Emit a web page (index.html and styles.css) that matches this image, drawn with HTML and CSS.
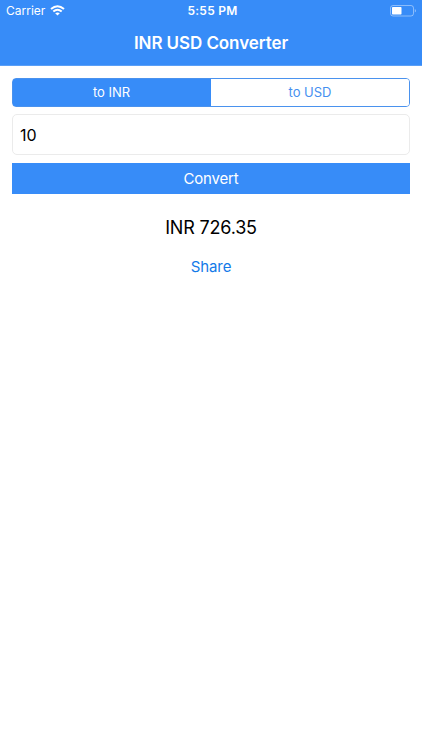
FILE: index.html
```html
<!DOCTYPE html>
<html lang="en">
<head>
<meta charset="utf-8">
<title>INR USD Converter</title>
<link rel="stylesheet" href="styles.css">
</head>
<body>
<header class="top">
  <div class="status">
    <div class="carrier"><span>Carrier</span>
      <svg class="wifi" width="15" height="11" viewBox="0 0 15 11" fill="none" stroke="#fff" stroke-width="2"><path d="M1 4.1Q7.5-1.7 14 4.1M3.300 6.600Q7.500 3 11.700 6.600"/><path d="M5.200 8.300Q7.500 6.500 9.800 8.300L7.500 10.600Z" fill="#fff" stroke="none"/></svg>
    </div>
    <div class="time">5:55 PM</div>
    <svg class="battery" width="26" height="12" viewBox="0 0 26 12"><rect x=".5" y=".5" width="23" height="10.500" rx="2.500" fill="none" stroke="#fff" stroke-opacity=".42"/><rect x="2" y="2" width="9.500" height="7.500" rx=".7" fill="#fff"/><path d="M24.800 3.900q1.200.5 1.200 1.800t-1.200 1.800Z" fill="#fff" fill-opacity=".45"/></svg>
  </div>
  <h1><span>INR USD Converter</span></h1>
</header>
<main>
  <div class="segments"><button class="active"><span>to INR</span></button><button><span>to USD</span></button></div>
  <div class="amount"><span>10</span></div>
  <button class="convert"><span>Convert</span></button>
  <p class="result"><span>INR 726.35</span></p>
  <a class="share"><span>Share</span></a>
</main>
</body>
</html>
```
FILE: styles.css
```css
* { box-sizing: border-box; }
body { margin: 0; min-height: 750px; background: #fff; color: #000; font-family: Inter, "Liberation Sans", sans-serif; }
button { margin: 0; padding: 0; border: 0; font: inherit; color: inherit; }
.top { height: 66px; background: #378cf8; border-bottom: 1px solid #5a9ff7; color: #fff; }
.status { height: 21px; padding: 0 6px; display: grid; grid-template-columns: 1fr auto 1fr; align-items: center; font-size: 12px; }
.carrier { display: flex; align-items: center; gap: 5px; }
.time { font-weight: 600; letter-spacing: .25px; padding-left: 3px; }
.battery { justify-self: end; }
h1 { margin: 0; height: 43px; display: flex; align-items: center; justify-content: center; font-size: 17px; font-weight: 600; letter-spacing: -.08px; }
main { padding: 12px 12px 0; display: flex; flex-direction: column; }
.segments { height: 29px; display: flex; border: 1px solid #4a92ee; border-radius: 4px; overflow: hidden; background: linear-gradient(90deg, #378cf8 50%, #fff 50%); font-size: 13px; }
.segments button { width: 50%; padding-bottom: 1px; background: #fff; color: #4690f0; }
.segments .active { padding-right: 1px; background: #378cf8; color: #fff; }
.amount { height: 41px; margin-top: 7px; padding: 0 7px; display: flex; align-items: center; border: 1px solid #ebebeb; border-radius: 5px; font-size: 16px; }
.convert { height: 31px; margin-top: 8px; background: #378cf8; color: #fff; font-size: 15px; letter-spacing: -.15px; }
.result { margin: 22px 0 0; text-align: center; font-size: 18px; line-height: 24px; letter-spacing: -.18px; }
.share { margin-top: 17px; text-align: center; color: #147ae8; font-size: 15px; line-height: 20px; letter-spacing: -.1px; }
```
